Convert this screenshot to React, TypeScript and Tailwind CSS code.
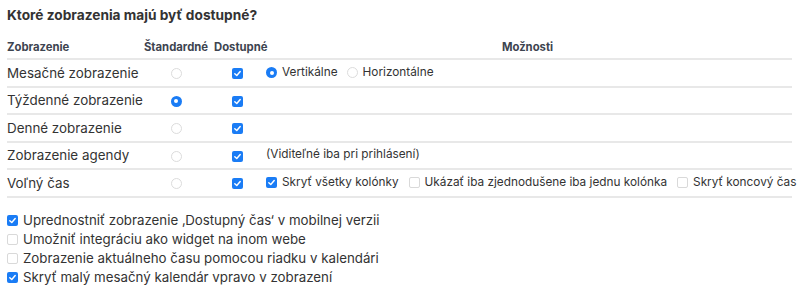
import React from "react"

const font = { fontFamily: "Inter, 'Liberation Sans', sans-serif" }

function Radio({ on }: { on?: boolean }) {
  return on ? (
    <span className="inline-flex h-[11px] w-[11px] items-center justify-center rounded-full bg-[#1a7cf5]">
      <span className="h-[4px] w-[4px] rounded-full bg-white" />
    </span>
  ) : (
    <span className="inline-block h-[11px] w-[11px] rounded-full border border-[#dcdcdc] bg-white" />
  )
}

function Check({ on }: { on?: boolean }) {
  return on ? (
    <span className="inline-flex h-[11px] w-[11px] shrink-0 items-center justify-center rounded-[2px] bg-[#1a7cf5]">
      <svg viewBox="0 0 10 10" className="h-[9px] w-[9px]">
        <path d="M2 5.2 L4.2 7.3 L8 2.8" fill="none" stroke="white" strokeWidth="1.6" strokeLinecap="round" strokeLinejoin="round" />
      </svg>
    </span>
  ) : (
    <span className="inline-block h-[11px] w-[11px] shrink-0 rounded-[2px] border border-[#d9d9d9] bg-white" />
  )
}

export default function App() {
  const rows = [
    {
      label: "Mesačné zobrazenie",
      std: false,
      options: (
        <div className="flex items-center gap-[5px] whitespace-nowrap">
          <Radio on />
          <span>Vertikálne</span>
          <span className="ml-[4px] flex"><Radio /></span>
          <span>Horizontálne</span>
        </div>
      ),
    },
    { label: "Týždenné zobrazenie", std: true, options: null },
    { label: "Denné zobrazenie", std: false, options: null },
    { label: "Zobrazenie agendy", std: false, options: <span>(Viditeľné iba pri prihlásení)</span> },
    {
      label: "Voľný čas",
      std: false,
      options: (
        <div className="flex items-center gap-[5px] whitespace-nowrap">
          <Check on />
          <span>Skryť všetky kolónky</span>
          <span className="ml-[5px] flex"><Check /></span>
          <span>Ukázať iba zjednodušene iba jednu kolónka</span>
          <span className="ml-[5px] flex"><Check /></span>
          <span>Skryť koncový čas</span>
        </div>
      ),
    },
  ]

  const extras = [
    { on: true, text: "Uprednostniť zobrazenie ‚Dostupný čas‘ v mobilnej verzii" },
    { on: false, text: "Umožniť integráciu ako widget na inom webe" },
    { on: false, text: "Zobrazenie aktuálneho času pomocou riadku v kalendári" },
    { on: true, text: "Skryť malý mesačný kalendár vpravo v zobrazení" },
  ]

  return (
    <div className="h-[290px] w-[806px] overflow-hidden bg-white text-[#333]" style={font}>
      <h2 className="pl-[7px] pt-[5px] text-[13.7px] font-bold leading-[20px] text-[#333]">
        Ktoré zobrazenia majú byť dostupné?
      </h2>

      <div className="ml-[7px] mt-[15px] w-[785px]">
        <div className="grid grid-cols-[134px_70px_52px_1fr] border-b-2 border-[#e8e8e8] pb-[4px] text-[11.3px] font-bold leading-[14px] text-[#3d4450]">
          <div>Zobrazenie</div>
          <div className="text-center">Štandardné</div>
          <div className="pl-[3px]">Dostupné</div>
          <div className="text-center">Možnosti</div>
        </div>

        {rows.map((r) => (
          <div
            key={r.label}
            className="grid h-[27.5px] grid-cols-[134px_70px_52px_1fr] items-center border-b-2 border-[#e8e8e8] text-[#333]"
          >
            <div className="whitespace-nowrap text-[13.4px] leading-[18px]">{r.label}</div>
            <div className="flex justify-center pt-[2px]">
              <Radio on={r.std} />
            </div>
            <div className="flex justify-center pt-[2px]">
              <Check on />
            </div>
            <div className="pl-[3px] text-[11.8px]">{r.options}</div>
          </div>
        ))}
      </div>

      <div className="mt-[13px] flex flex-col pl-[7px] text-[13.3px] leading-[19px] text-[#333]">
        {extras.map((e) => (
          <div key={e.text} className="flex items-center gap-[5px]">
            <Check on={e.on} />
            <span>{e.text}</span>
          </div>
        ))}
      </div>
    </div>
  )
}
